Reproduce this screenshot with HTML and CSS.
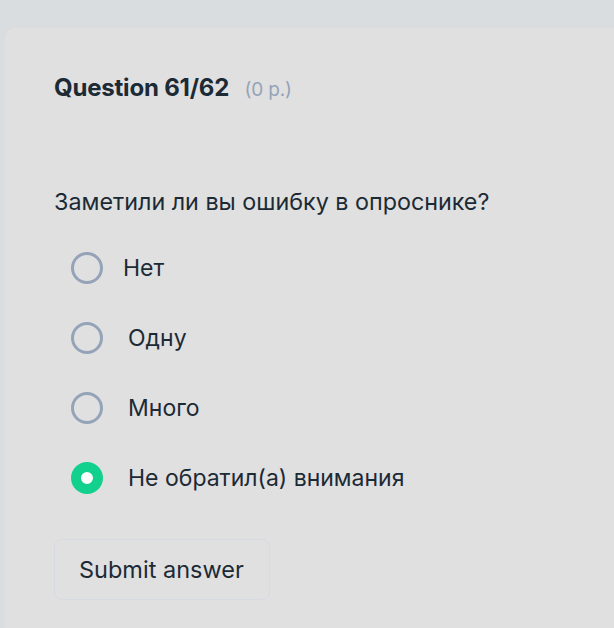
FILE: index.html
```html
<!DOCTYPE html>
<html lang="ru">
<head>
  <meta charset="UTF-8">
  <title>Quiz</title>
  <link rel="stylesheet" href="styles.css">
</head>
<body>
  <main class="card">
    <h2 class="q-title">Question 61/62 <span class="points">(0 p.)</span></h2>
    <p class="q-text">Заметили ли вы ошибку в опроснике?</p>
    <form class="options">
      <label class="option option-tight">
        <span class="radio"></span>
        <span class="opt-label">Нет</span>
      </label>
      <label class="option">
        <span class="radio"></span>
        <span class="opt-label">Одну</span>
      </label>
      <label class="option">
        <span class="radio"></span>
        <span class="opt-label">Много</span>
      </label>
      <label class="option">
        <span class="radio checked"></span>
        <span class="opt-label">Не обратил(а) внимания</span>
      </label>
    </form>
    <button class="submit" type="button">Submit answer</button>
  </main>
</body>
</html>
```

FILE: styles.css
```css
* {
  margin: 0;
  padding: 0;
  box-sizing: border-box;
  font-family: Inter, "Noto Sans", sans-serif;
}
body {
  background: #d9dde0;
  color: #1c2a36;
  padding: 28px 0 0 5px;
}
.card {
  background: #e0e0e0;
  border-radius: 10px 0 0 0;
  padding: 45px 20px 40px 49px;
  min-height: 600px;
}
.q-title {
  font-size: 24px;
  font-weight: 700;
  line-height: 30px;
  letter-spacing: -0.2px;
}
.points {
  font-size: 19px;
  font-weight: 400;
  color: #94a3b8;
  margin-left: 10px;
}
.q-text {
  margin-top: 82px;
  font-size: 23.3px;
  line-height: 30px;
}
.options {
  margin-top: 16px;
  display: flex;
  flex-direction: column;
}
.option {
  display: flex;
  align-items: center;
  height: 70px;
  padding-left: 17px;
  gap: 25px;
  font-size: 23px;
}
.option-tight {
  gap: 20px;
}
.radio {
  width: 32px;
  height: 32px;
  border-radius: 50%;
  border: 3px solid #94a3b8;
  flex-shrink: 0;
}
.radio.checked {
  border: 10px solid #12d18e;
  background: #fff;
}
.submit {
  margin-top: 26px;
  height: 61px;
  padding: 0 24px 0 24px;
  width: 216px;
  background: #e0e0e0;
  border: 1px solid #d6dbe2;
  border-radius: 8px;
  font-size: 23.5px;
  text-align: left;
  color: #1c2a36;
}
```
